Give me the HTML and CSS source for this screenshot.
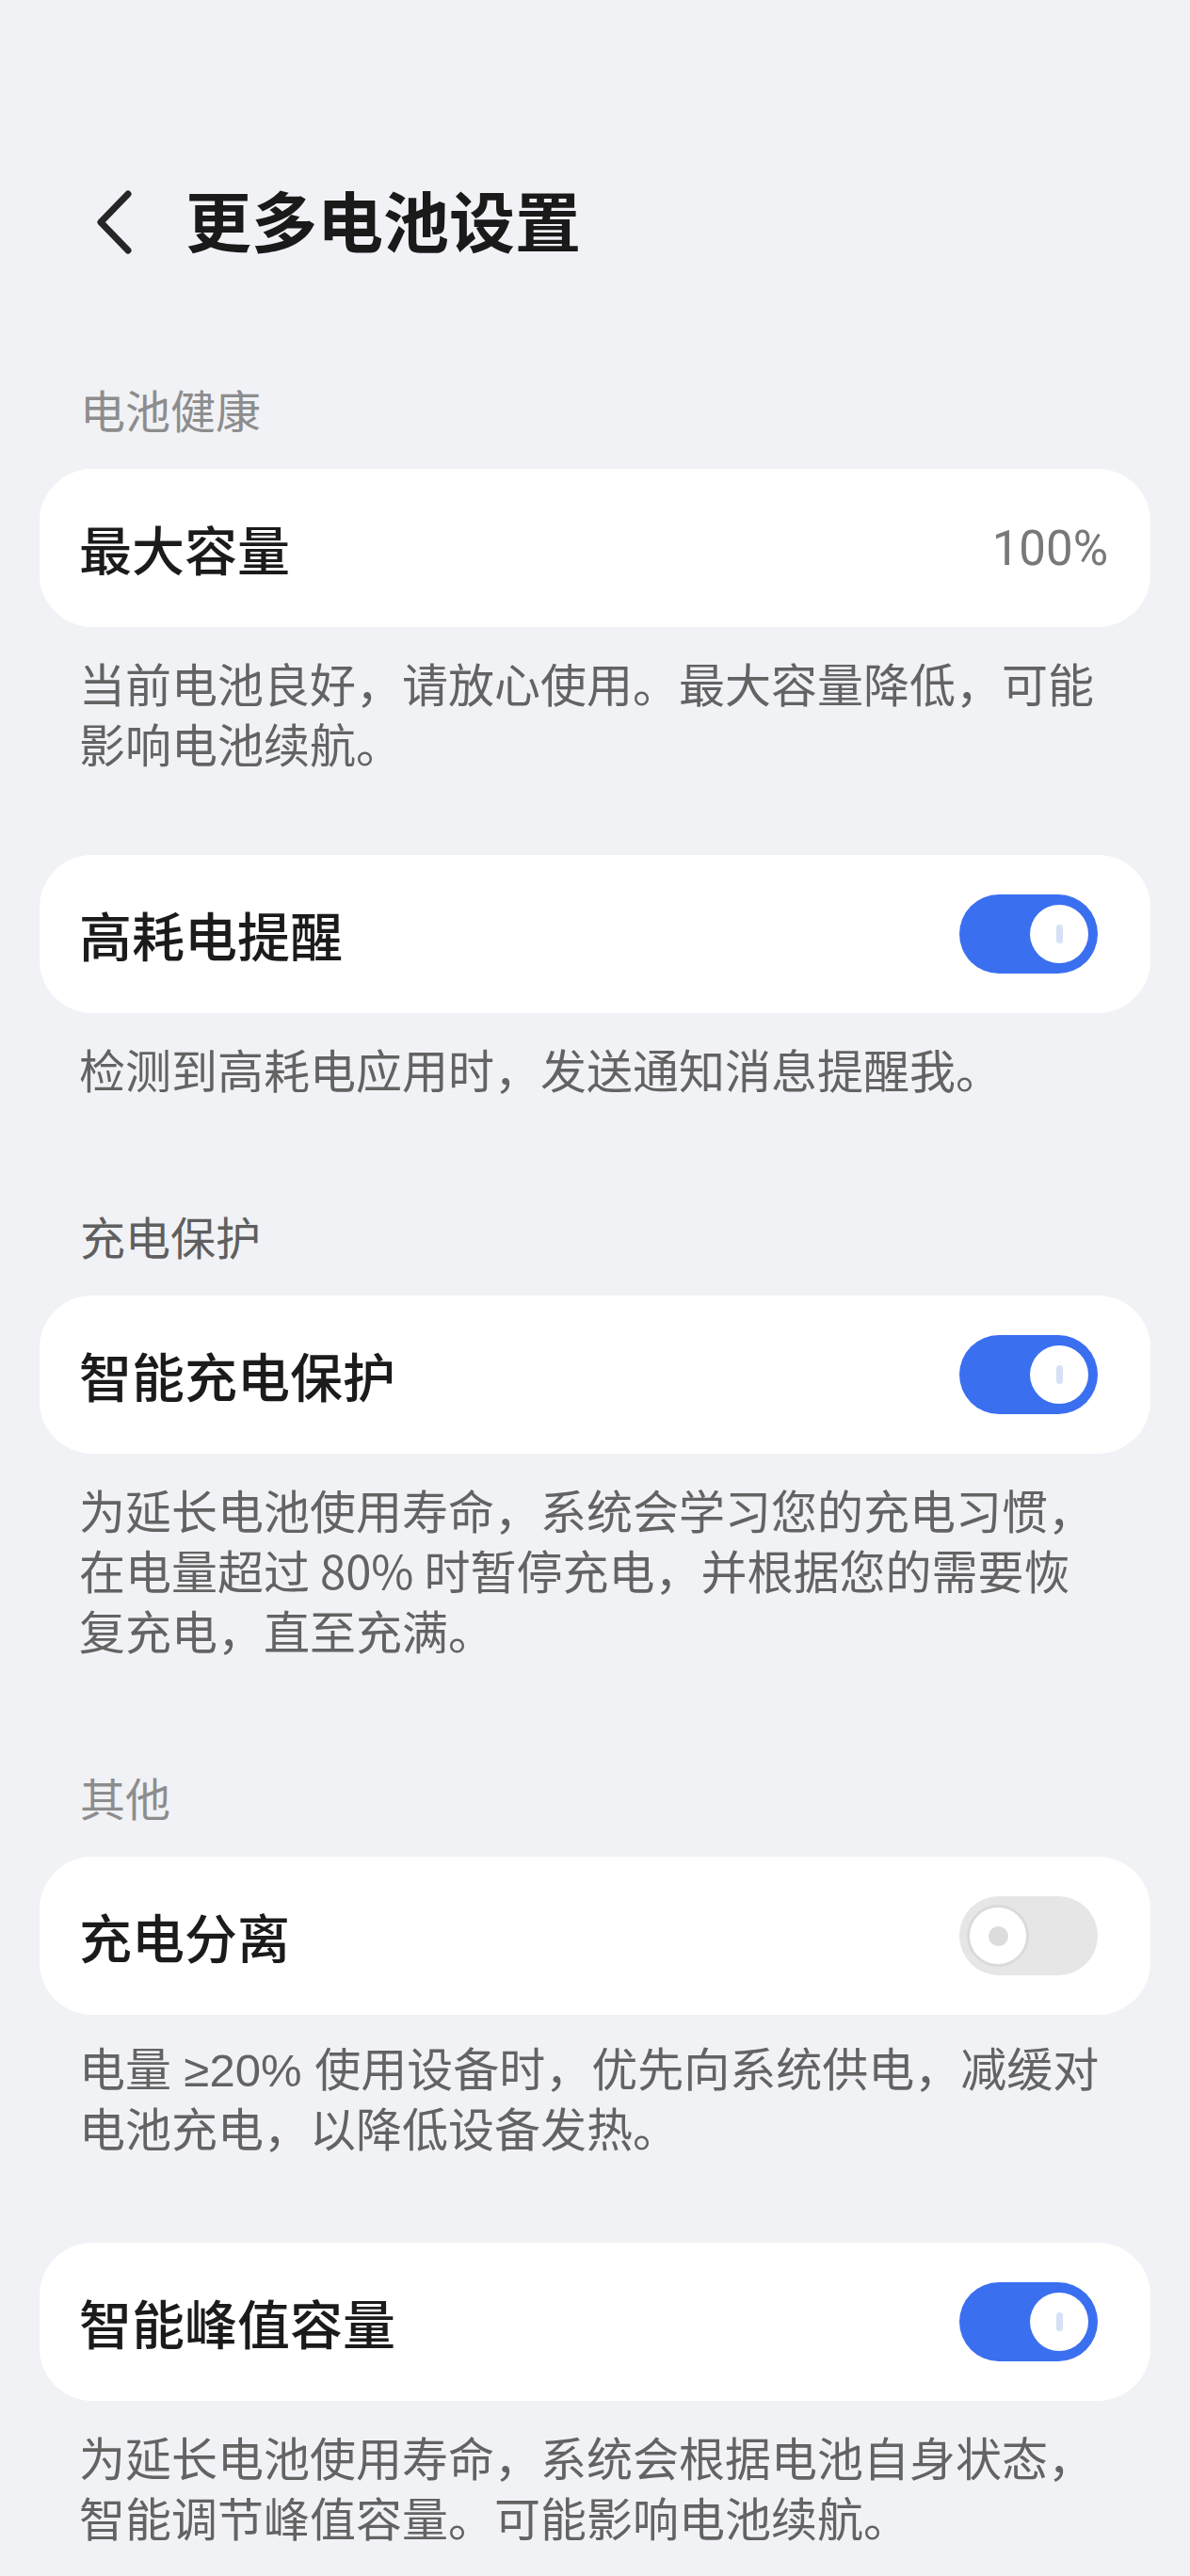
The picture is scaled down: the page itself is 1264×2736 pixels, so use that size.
FILE: index.html
```html
<!DOCTYPE html>
<html lang="zh-CN">
<head>
<meta charset="utf-8">
<title>更多电池设置</title>
<link rel="stylesheet" href="styles.css">
</head>
<body>
<main class="page">
  <header class="page-header">
    <svg class="back" viewBox="0 0 44 78" width="44" height="78" aria-hidden="true">
      <path d="M36 12 L7 42 L36 72" fill="none" stroke="#262626" stroke-width="7" stroke-linecap="round" stroke-linejoin="round"/>
    </svg>
    <h1 class="page-title">更多电池设置</h1>
  </header>

  <h2 class="section-label">电池健康</h2>
  <div class="group">
    <div class="card">
      <span class="card-title">最大容量</span>
      <span class="card-value">100%</span>
    </div>
    <p class="desc">当前电池良好，请放心使用。最大容量降低，可能影响电池续航。</p>
  </div>
  <div class="group">
    <div class="card">
      <span class="card-title">高耗电提醒</span>
      <span class="toggle on"><span class="knob"></span></span>
    </div>
    <p class="desc">检测到高耗电应用时，发送通知消息提醒我。</p>
  </div>

  <h2 class="section-label dark">充电保护</h2>
  <div class="group">
    <div class="card">
      <span class="card-title">智能充电保护</span>
      <span class="toggle on"><span class="knob"></span></span>
    </div>
    <p class="desc">为延长电池使用寿命，系统会学习您的充电习惯，在电量超过 80% 时暂停充电，并根据您的需要恢复充电，直至充满。</p>
  </div>

  <h2 class="section-label">其他</h2>
  <div class="group">
    <div class="card">
      <span class="card-title">充电分离</span>
      <span class="toggle off"><span class="knob"></span></span>
    </div>
    <p class="desc desc-latin">电量 ≥20% 使用设备时，优先向系统供电，减缓对电池充电，以降低设备发热。</p>
  </div>
  <div class="group">
    <div class="card">
      <span class="card-title">智能峰值容量</span>
      <span class="toggle on"><span class="knob"></span></span>
    </div>
    <p class="desc">为延长电池使用寿命，系统会根据电池自身状态，智能调节峰值容量。可能影响电池续航。</p>
  </div>
</main>
</body>
</html>
```

FILE: styles.css
```css
html, body {
  margin: 0;
  padding: 0;
  background: #f1f2f6;
}

body {
  font-family: "Noto Sans CJK SC", "Noto Sans", sans-serif;
  color: #1b1b1b;
  min-height: 2736px;
}

.page {
  display: flex;
  flex-direction: column;
}

.page-header {
  display: flex;
  align-items: center;
  height: 96px;
  margin-top: 185px;
  margin-bottom: 8px;
}

.back {
  margin-left: 100px;
  flex: none;
}

.page-title {
  margin: 0 0 0 53px;
  font-size: 70px;
  line-height: 96px;
  font-weight: 700;
  color: #1a1a1a;
}

.section-label {
  margin: 113px 0 32px 85px;
  font-size: 48px;
  line-height: 64px;
  font-weight: 400;
  color: #8d8d8d;
}

.section-label.dark {
  color: #5f5f5f;
}

.group + .group {
  margin-top: 87px;
}

.card {
  margin: 0 42px;
  height: 168px;
  box-sizing: border-box;
  background: #ffffff;
  border-radius: 56px;
  padding: 0 56px 0 42px;
  display: flex;
  align-items: center;
  justify-content: space-between;
}

.card-title {
  font-size: 56px;
  line-height: 64px;
  font-weight: 500;
  color: #1b1b1b;
}

.card-value {
  font-family: "Roboto", "Noto Sans", sans-serif;
  font-size: 51px;
  color: #787878;
  margin-right: -11px;
}

.desc {
  margin: 27px 0 0 84px;
  width: 1100px;
  font-size: 49px;
  line-height: 64px;
  color: #636363;
}

.desc-latin {
  font-family: "Liberation Sans", "Noto Sans CJK SC", sans-serif;
}

.toggle {
  flex: none;
  width: 147px;
  height: 84px;
  border-radius: 42px;
  box-sizing: border-box;
  display: flex;
  align-items: center;
}

.toggle.on {
  background: #3a6ff0;
  justify-content: flex-end;
  padding-right: 10px;
}

.toggle.off {
  background: #e6e6e6;
  justify-content: flex-start;
  padding-left: 8px;
}

.knob {
  background: #ffffff;
  border-radius: 50%;
  display: flex;
  align-items: center;
  justify-content: center;
  box-sizing: border-box;
}

.toggle.on .knob {
  width: 62px;
  height: 62px;
}

.toggle.on .knob::after {
  content: "";
  width: 7px;
  height: 20px;
  border-radius: 4px;
  background: #d6e0f7;
}

.toggle.off .knob {
  width: 66px;
  height: 66px;
  border: 3px solid #dadada;
}

.toggle.off .knob::after {
  content: "";
  width: 21px;
  height: 21px;
  border-radius: 50%;
  background: #dcdcdc;
}
```
